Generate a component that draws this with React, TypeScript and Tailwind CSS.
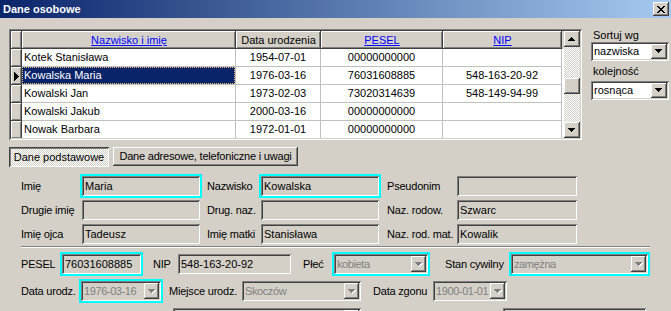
import React from 'react';

const sunken =
  'shadow-[inset_1px_1px_0_#808080,inset_-1px_-1px_0_#ffffff,inset_2px_2px_0_#404040,inset_-2px_-2px_0_#d4d0c8]';
const raised = 'shadow-[inset_-1px_-1px_0_#404040,inset_1px_1px_0_#ffffff,inset_-2px_-2px_0_#808080]';
const pressed = 'shadow-[inset_1px_1px_0_#404040,inset_-1px_-1px_0_#ffffff,inset_2px_2px_0_#808080]';
const dither = 'bg-[image:repeating-conic-gradient(#ffffff_0%_25%,#d4d0c8_0%_50%)] bg-[length:2px_2px]';

const DOWN = 'M0 0h7v1h-1v1h-1v1h-1v1h-1v-1h-1v-1h-1v-1h-1z';
const UP = 'M3 0h1v1h1v1h1v1h1v1h-7v-1h1v-1h1v-1h1z';

const Arrow = ({ up, disabled }: { up?: boolean; disabled?: boolean }) => (
  <svg width="8" height="5" viewBox="0 0 8 5" shapeRendering="crispEdges">
    {disabled && <path d={up ? UP : DOWN} fill="#ffffff" transform="translate(1,1)" />}
    <path d={up ? UP : DOWN} fill={disabled ? '#808080' : '#000000'} />
  </svg>
);

const rows = [
  { name: 'Kotek Stanisława', date: '1954-07-01', pesel: '00000000000', nip: '' },
  { name: 'Kowalska Maria', date: '1976-03-16', pesel: '76031608885', nip: '548-163-20-92', sel: true },
  { name: 'Kowalski Jan', date: '1973-02-03', pesel: '73020314639', nip: '548-149-94-99' },
  { name: 'Kowalski Jakub', date: '2000-03-16', pesel: '00000000000', nip: '' },
  { name: 'Nowak Barbara', date: '1972-01-01', pesel: '00000000000', nip: '' },
];

const Grid = () => (
  <div className={`w-[573px] h-[111px] p-[2px] bg-white ${sunken} shrink-0`}>
    <div className="flex h-full overflow-hidden">
      <div className="flex-1 flex flex-col">
        {/* header */}
        <div className="flex h-[18px] shrink-0 bg-[#d4d0c8]">
          <div className={`w-[11px] ${raised}`} />
          <div className={`w-[214px] ${raised} flex items-center justify-center text-[#0000ff] underline`}>
            Nazwisko i imię
          </div>
          <div className={`w-[85px] ${raised} flex items-center justify-center`}>Data urodzenia</div>
          <div className={`w-[122px] ${raised} flex items-center justify-center text-[#0000ff] underline`}>
            PESEL
          </div>
          <div className={`w-[119px] ${raised} flex items-center justify-center text-[#0000ff] underline`}>NIP</div>
          <div className="flex-1" />
        </div>
        {rows.map((r) => (
          <div key={r.name} className="flex h-[18px] shrink-0">
            <div className={`w-[11px] bg-[#d4d0c8] ${raised} flex items-center justify-center`}>
              {r.sel && (
                <svg width="5" height="9" viewBox="0 0 5 9" shapeRendering="crispEdges">
                  <path d="M0 0h1v1h1v1h1v1h1v1h1v1h-1v1h-1v1h-1v1h-1v1h-1z" fill="#000" />
                </svg>
              )}
            </div>
            <div className="w-[214px] border-r border-b border-[#c0c0c0] flex">
              <div
                className={`flex-1 flex items-center pl-[2px] ${
                  r.sel ? 'bg-[#0a246a] text-white outline-1 outline-dotted outline-[#e8c078] -outline-offset-1' : ''
                }`}
              >
                {r.name}
              </div>
            </div>
            <div className="w-[85px] border-r border-b border-[#c0c0c0] flex items-center justify-center">{r.date}</div>
            <div className="w-[122px] border-r border-b border-[#c0c0c0] flex items-center justify-center">{r.pesel}</div>
            <div className="w-[119px] border-r border-b border-[#c0c0c0] flex items-center justify-center">{r.nip}</div>
            <div className="flex-1" />
          </div>
        ))}
      </div>
      {/* scrollbar */}
      <div className="w-[16px] flex flex-col shrink-0">
        <div className={`h-[16px] bg-[#d4d0c8] ${raised} flex items-center justify-center`}>
          <Arrow up />
        </div>
        <div className={`h-[31px] ${dither}`} />
        <div className={`h-[16px] bg-[#d4d0c8] ${raised}`} />
        <div className={`flex-1 ${dither}`} />
        <div className={`h-[16px] bg-[#d4d0c8] ${raised} flex items-center justify-center`}>
          <Arrow />
        </div>
      </div>
    </div>
  </div>
);

const Select = ({ value }: { value: string }) => (
  <div className={`w-[78px] h-[19px] bg-white ${sunken} flex items-center pl-[3px] pr-[2px]`}>
    <span className="flex-1">{value}</span>
    <div className={`w-[16px] h-[15px] bg-[#d4d0c8] ${raised} flex items-center justify-center`}>
      <Arrow />
    </div>
  </div>
);

const Label = ({ className, children }: { className: string; children?: React.ReactNode }) => (
  <span className={`shrink-0 whitespace-nowrap tracking-[-0.2px] ${className}`}>{children}</span>
);

const Field = ({ w, value, cyan }: { w: string; value?: string; cyan?: boolean }) => (
  <div className={`${w} h-[24px] shrink-0 border-2 ${cyan ? 'border-[#00ffff]' : 'border-transparent'}`}>
    <div className={`h-full bg-[#d4d0c8] ${sunken} pl-[3px] flex items-center whitespace-nowrap overflow-hidden`}>
      {value}
    </div>
  </div>
);

const Combo = ({ w, value, cyan }: { w: string; value?: string; cyan?: boolean }) => (
  <div className={`${w} h-[24px] shrink-0 border-2 ${cyan ? 'border-[#00ffff]' : 'border-transparent'}`}>
    <div className={`h-full bg-[#d4d0c8] ${sunken} pl-[3px] pr-[2px] flex items-center whitespace-nowrap`}>
      <span className="flex-1 text-[#808080] tracking-[-0.4px] overflow-hidden">{value}</span>
      <div className={`w-[15px] h-[16px] shrink-0 bg-[#d4d0c8] ${raised} flex items-center justify-center`}>
        <Arrow disabled />
      </div>
    </div>
  </div>
);

export default function App() {
  return (
    <div className="w-[671px] h-[311px] overflow-hidden bg-[#d4d0c8] text-black text-[11px] leading-none font-['Liberation_Sans',Arial,sans-serif]">
      {/* title bar */}
      <div className="h-[18px] flex items-center justify-between pl-[3px] pr-[2px] bg-[linear-gradient(to_right,#0a246a,#a6caf0)]">
        <span className="text-white font-bold text-[11px]">Dane osobowe</span>
        <div className={`w-[16px] h-[14px] bg-[#d4d0c8] ${raised} flex items-center justify-center`}>
          <svg width="8" height="7" viewBox="0 0 8 7" shapeRendering="crispEdges">
            <path
              d="M0 0h2v1h-2zM6 0h2v1h-2zM1 1h2v1h-2zM5 1h2v1h-2zM2 2h4v1h-4zM3 3h2v1h-2zM2 4h4v1h-4zM1 5h2v1h-2zM5 5h2v1h-2zM0 6h2v1h-2zM6 6h2v1h-2z"
              fill="#000"
            />
          </svg>
        </div>
      </div>

      {/* grid + sort options */}
      <div className="flex pt-[11px] pl-[9px]">
        <Grid />
        <div className="ml-[9px] flex flex-col">
          <div className="h-[13px] pl-[2px] flex items-center">Sortuj wg</div>
          <Select value="nazwiska" />
          <div className="h-[20px] pl-[2px] flex items-center">kolejność</div>
          <Select value="rosnąca" />
        </div>
      </div>

      {/* tabs */}
      <div className="flex items-start gap-[4px] pl-[9px] mt-[7px]">
        <div className={`w-[100px] h-[20px] ${dither} ${pressed} flex items-center justify-center`}>
          Dane podstawowe
        </div>
        <div className={`w-[185px] h-[19px] bg-[#d4d0c8] ${raised} flex items-center justify-center tracking-[-0.2px]`}>
          Dane adresowe, telefoniczne i uwagi
        </div>
      </div>

      {/* names */}
      <div className="mt-[7px] flex flex-col">
        <div className="h-[24px] flex items-center pl-[21px]">
          <Label className="w-[59px]">Imię</Label>
          <Field w="w-[122px]" value="Maria" cyan />
          <Label className="w-[57px] pl-[5px]">Nazwisko</Label>
          <Field w="w-[122px]" value="Kowalska" cyan />
          <Label className="w-[74px] pl-[6px]">Pseudonim</Label>
          <Field w="w-[124px]" />
        </div>
        <div className="h-[24px] flex items-center pl-[21px]">
          <Label className="w-[59px]">Drugie imię</Label>
          <Field w="w-[122px]" />
          <Label className="w-[57px] pl-[5px]">Drug. naz.</Label>
          <Field w="w-[122px]" />
          <Label className="w-[74px] pl-[6px]">Naz. rodow.</Label>
          <Field w="w-[124px]" value="Szwarc" />
        </div>
        <div className="h-[24px] flex items-center pl-[21px]">
          <Label className="w-[59px]">Imię ojca</Label>
          <Field w="w-[122px]" value="Tadeusz" />
          <Label className="w-[57px] pl-[5px]">Imię matki</Label>
          <Field w="w-[122px]" value="Stanisława" />
          <Label className="w-[74px] pl-[6px]">Naz. rod. mat.</Label>
          <Field w="w-[124px]" value="Kowalik" />
        </div>
      </div>

      <div className="ml-[21px] w-[629px] h-[2px] border-t border-b border-t-[#808080] border-b-white" />

      {/* identity */}
      <div className="mt-[4px] h-[24px] flex items-center pl-[21px]">
        <Label className="w-[39px]">PESEL</Label>
        <Field w="w-[83px]" value="76031608885" cyan />
        <Label className="w-[33px] pl-[10px]">NIP</Label>
        <Field w="w-[117px]" value="548-163-20-92" />
        <Label className="w-[39px] pl-[10px]">Płeć</Label>
        <Combo w="w-[98px]" value="kobieta" cyan />
        <Label className="w-[79px] pl-[15px]">Stan cywilny</Label>
        <Combo w="w-[141px]" value="zamężna" cyan />
      </div>
      <div className="mt-[3px] h-[24px] flex items-center pl-[21px]">
        <Label className="w-[58px]">Data urodz.</Label>
        <Combo w="w-[84px]" value="1976-03-16" cyan />
        <Label className="w-[77px] pl-[6px]">Miejsce urodz.</Label>
        <Combo w="w-[123px]" value="Skoczów" />
        <Label className="w-[68px] pl-[10px]">Data zgonu</Label>
        <Combo w="w-[78px]" value="1900-01-01" />
      </div>
      <div className="mt-[3px] h-[24px] flex items-center pl-[21px]">
        <Label className="w-[150px]" />
        <Combo w="w-[192px]" />
        <Label className="w-[138px]" />
        <Field w="w-[147px]" />
      </div>
    </div>
  );
}
